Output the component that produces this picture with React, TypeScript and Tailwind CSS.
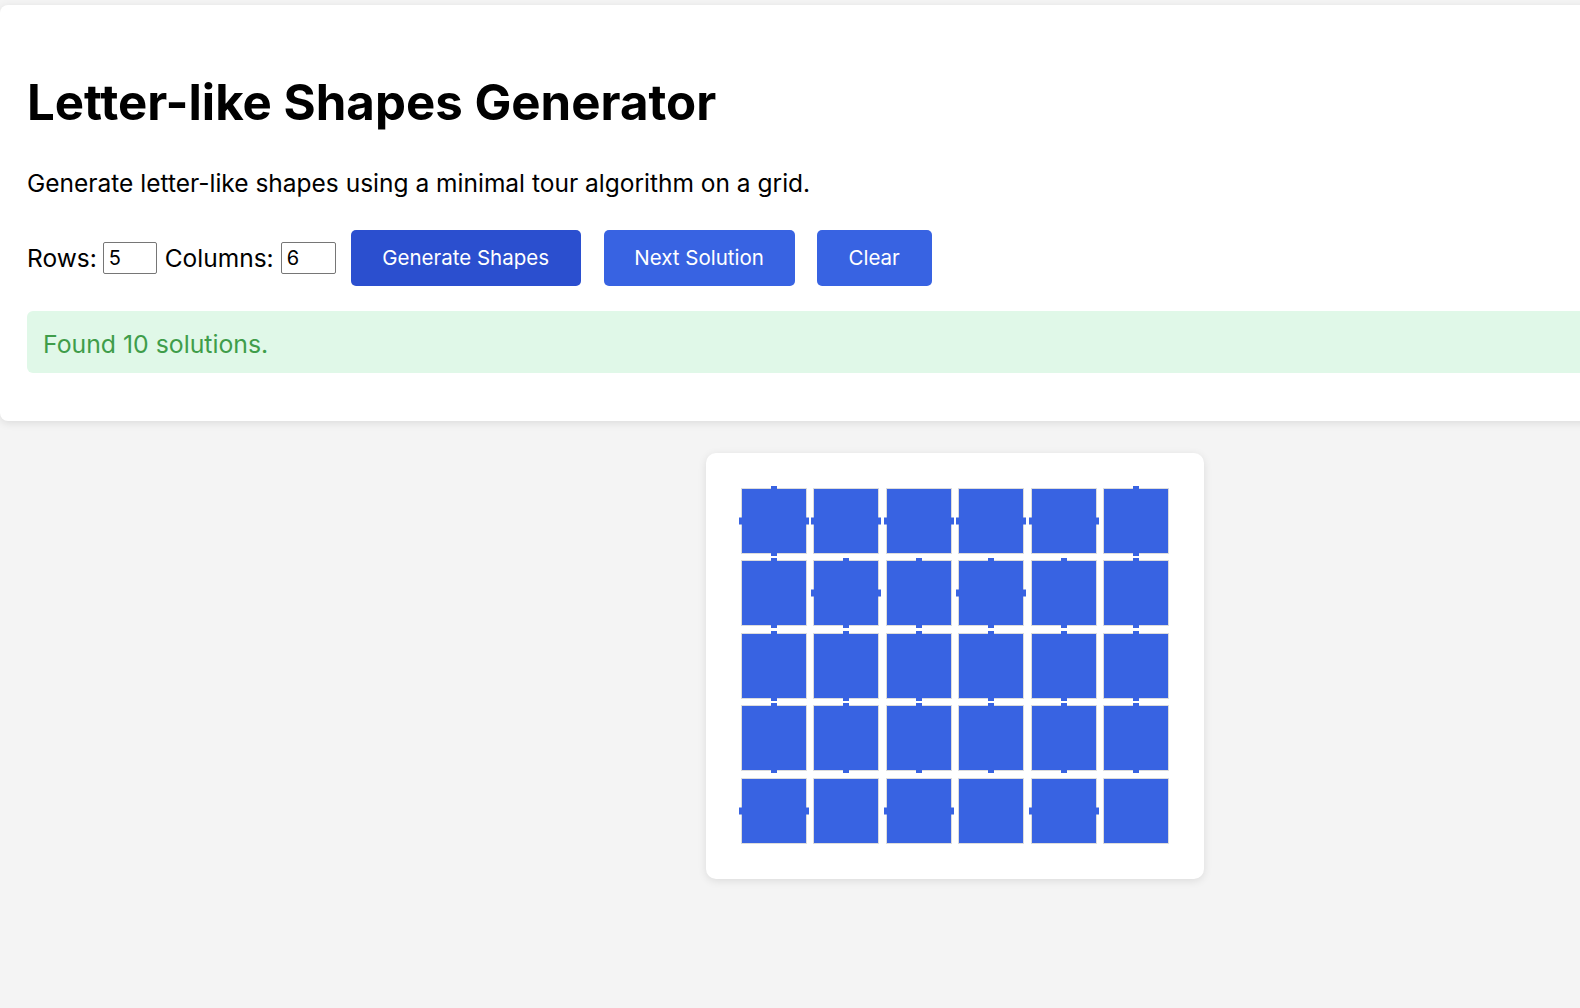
import React from "react"

type Ticks = { t?: boolean; b?: boolean; l?: boolean; r?: boolean }

// connection marks per cell, read row by row
const rows: Ticks[][] = [
  [{ t: true, l: true, r: true, b: true }, { l: true, r: true }, { l: true, r: true }, { l: true, r: true }, { l: true, r: true }, { t: true, b: true }],
  [{ t: true, b: true }, { t: true, l: true, r: true, b: true }, { t: true, b: true }, { t: true, l: true, r: true, b: true }, { t: true, b: true }, { t: true, b: true }],
  [{ t: true, b: true }, { t: true, b: true }, { t: true, b: true }, { t: true, b: true }, { t: true, b: true }, { t: true, b: true }],
  [{ t: true, b: true }, { t: true, b: true }, { t: true, b: true }, { t: true, b: true }, { t: true, b: true }, { t: true, b: true }],
  [{ l: true, r: true }, {}, { l: true, r: true }, {}, { l: true, r: true }, {}],
]

const Cell = ({ ticks }: { ticks: Ticks }) => (
  <div className="relative h-[66px] w-[66px] border border-[#dcdcdc] bg-[#3863e2]">
    {ticks.t && <div className="absolute left-1/2 top-[-3px] h-[4px] w-[6px] -translate-x-1/2 bg-[#3863e2]" />}
    {ticks.b && <div className="absolute bottom-[-3px] left-1/2 h-[4px] w-[6px] -translate-x-1/2 bg-[#3863e2]" />}
    {ticks.l && <div className="absolute left-[-3px] top-1/2 h-[7px] w-[4px] -translate-y-1/2 bg-[#3863e2]" />}
    {ticks.r && <div className="absolute right-[-3px] top-1/2 h-[7px] w-[4px] -translate-y-1/2 bg-[#3863e2]" />}
  </div>
)

export default function App() {
  return (
    <div className="min-h-screen w-[1580px] overflow-hidden bg-[#f4f4f4] font-['Inter',sans-serif] text-black">
      <div className="flex w-[1910px] flex-col items-center pt-[5px]">
        <div className="w-full rounded-lg bg-white px-[27px] pb-[48px] pt-[67px] shadow-[0_2px_8px_rgba(0,0,0,0.1)]">
          <h1 className="text-[49.2px] font-bold leading-[60px]">Letter-like Shapes Generator</h1>
          <p className="mt-[35px] text-[24.5px] leading-[32px]">
            Generate letter-like shapes using a minimal tour algorithm on a grid.
          </p>

          <div className="mt-[31px] flex h-[56px] items-center text-[24.5px]">
            <label>Rows:</label>
            <input
              type="number"
              defaultValue={5}
              className="ml-[6px] h-[32px] w-[54px] rounded-[2px] border border-[#767676] px-[5px] text-[20px] [appearance:textfield]"
            />
            <label className="ml-[8px]">Columns:</label>
            <input
              type="number"
              defaultValue={6}
              className="ml-[7px] h-[32px] w-[55px] rounded-[2px] border border-[#767676] px-[5px] text-[20px] [appearance:textfield]"
            />
            <button className="ml-[15px] h-[56px] w-[230px] rounded-[5px] bg-[#2b4fcf] text-[20.5px] text-white">
              Generate Shapes
            </button>
            <button className="ml-[23px] h-[56px] w-[191px] rounded-[5px] bg-[#3863e2] text-[20.5px] text-white">
              Next Solution
            </button>
            <button className="ml-[22px] h-[56px] w-[115px] rounded-[5px] bg-[#3863e2] text-[20.5px] text-white">
              Clear
            </button>
          </div>

          <div className="mt-[25px] rounded-md bg-[#e0f8e8] px-4 pb-[14px] pt-[18px] text-[24.8px] leading-[30px] text-[#3f9d4a]">
            Found 10 solutions.
          </div>
        </div>

        <div className="mt-[32px] rounded-[10px] bg-white p-[35px] shadow-[0_2px_8px_rgba(0,0,0,0.1)]">
          <div className="grid grid-cols-[repeat(6,66px)] gap-[6.4px]">
            {rows.map((row, r) => row.map((ticks, c) => <Cell key={`${r}-${c}`} ticks={ticks} />))}
          </div>
        </div>
      </div>
    </div>
  )
}
